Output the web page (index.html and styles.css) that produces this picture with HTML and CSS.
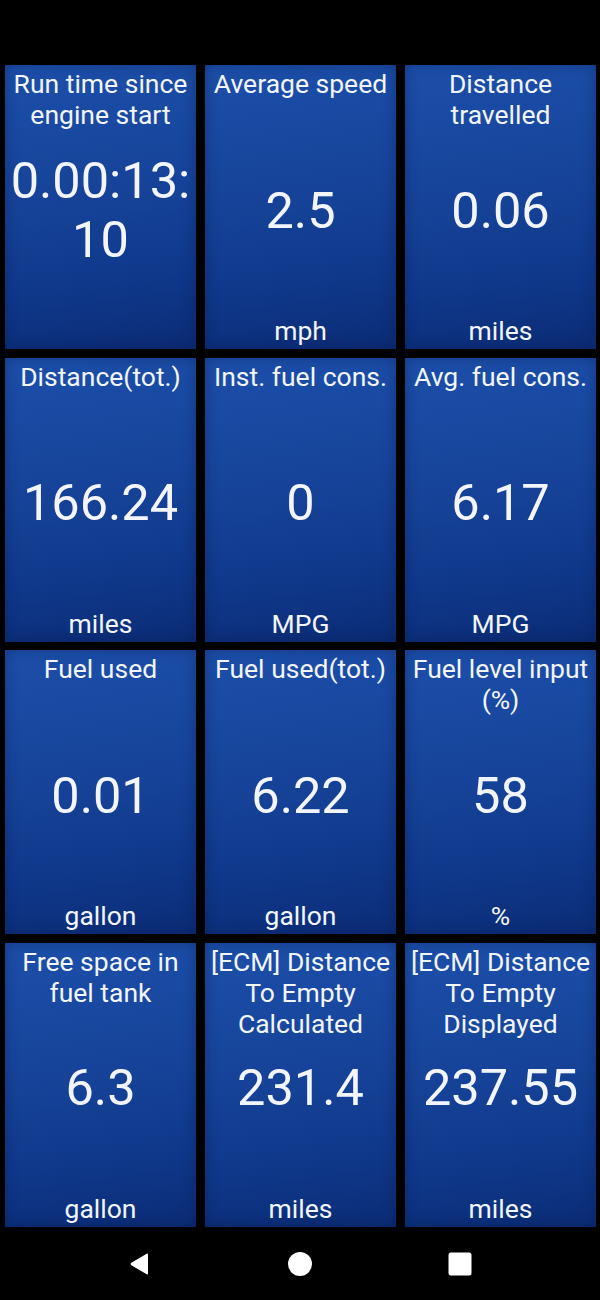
FILE: index.html
```html
<!DOCTYPE html>
<html lang="en">
<head>
    <meta charset="UTF-8">
    <meta name="viewport" content="width=device-width, initial-scale=1.0">
    <title>Trip info</title>
    <link rel="stylesheet" href="styles.css">
</head>
<body>
    <div class="status-bar"></div>

    <div class="grid">
        <div class="tile">
            <div class="title">Run time since engine start</div>
            <div class="value">0.00:13:<br>10</div>
            <div class="unit"></div>
        </div>
        <div class="tile">
            <div class="title">Average speed</div>
            <div class="value">2.5</div>
            <div class="unit">mph</div>
        </div>
        <div class="tile">
            <div class="title">Distance travelled</div>
            <div class="value">0.06</div>
            <div class="unit">miles</div>
        </div>

        <div class="tile">
            <div class="title">Distance(tot.)</div>
            <div class="value">166.24</div>
            <div class="unit">miles</div>
        </div>
        <div class="tile">
            <div class="title">Inst. fuel cons.</div>
            <div class="value">0</div>
            <div class="unit">MPG</div>
        </div>
        <div class="tile">
            <div class="title">Avg. fuel cons.</div>
            <div class="value">6.17</div>
            <div class="unit">MPG</div>
        </div>

        <div class="tile">
            <div class="title">Fuel used</div>
            <div class="value">0.01</div>
            <div class="unit">gallon</div>
        </div>
        <div class="tile">
            <div class="title">Fuel used(tot.)</div>
            <div class="value">6.22</div>
            <div class="unit">gallon</div>
        </div>
        <div class="tile">
            <div class="title">Fuel level input (%)</div>
            <div class="value">58</div>
            <div class="unit">%</div>
        </div>

        <div class="tile">
            <div class="title">Free space in fuel tank</div>
            <div class="value">6.3</div>
            <div class="unit">gallon</div>
        </div>
        <div class="tile">
            <div class="title">[ECM] Distance To Empty Calculated</div>
            <div class="value">231.4</div>
            <div class="unit">miles</div>
        </div>
        <div class="tile">
            <div class="title">[ECM] Distance To Empty Displayed</div>
            <div class="value">237.55</div>
            <div class="unit">miles</div>
        </div>
    </div>

    <div class="nav-bar">
        <svg class="nav-icon" viewBox="0 0 24 24" width="24" height="24">
            <path d="M20 2.5 L20 21.5 Q20 23 18.7 22.3 L3.3 13.2 Q2 12 3.3 10.8 L18.7 1.7 Q20 1 20 2.5 Z" fill="#fff"/>
        </svg>
        <svg class="nav-icon" viewBox="0 0 24 24" width="24" height="24">
            <circle cx="12" cy="12" r="12" fill="#fff"/>
        </svg>
        <svg class="nav-icon" viewBox="0 0 24 24" width="24" height="24">
            <rect x="0.5" y="0.5" width="23" height="23" rx="2.5" fill="#fff"/>
        </svg>
    </div>
</body>
</html>
```

FILE: styles.css
```css
body { margin: 0; background: #000; font-family: Roboto, "Noto Sans", sans-serif; color: #f2f5fb; width: 600px; height: 1300px; overflow: hidden; }
.status-bar { height: 65px; }
.grid { display: grid; grid-template-columns: repeat(3, 191px); grid-template-rows: repeat(4, 284px); column-gap: 9px; row-gap: 8.5px; padding-left: 5px; }
.tile { display: grid; grid-template-rows: 1fr auto 1fr; text-align: center; background: linear-gradient(172deg, #1c4faa 0%, #164399 45%, #0f388a 75%, #0b2c76 100%); box-shadow: inset 0 0 14px rgba(4, 20, 60, 0.35); }
.title { align-self: start; font-size: 26.5px; line-height: 31px; padding: 3px 2px 0; }
.value { align-self: center; font-size: 50.5px; line-height: 59px; padding-top: 6px; }
.unit { align-self: end; font-size: 26.5px; line-height: 31px; padding-bottom: 3px; }
.nav-bar { height: 74px; display: flex; justify-content: center; align-items: center; gap: 136px; }
.nav-icon { display: block; }
```
